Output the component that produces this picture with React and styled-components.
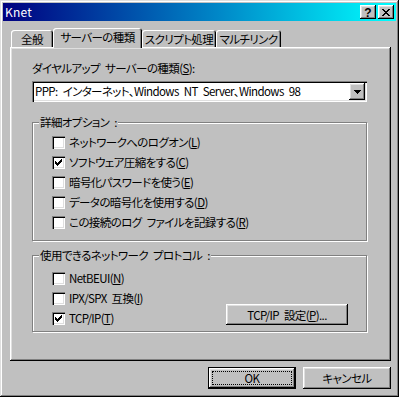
import React from "react";
import styled, { createGlobalStyle } from "styled-components";

const GlobalStyle = createGlobalStyle`
  html, body {
    margin: 0;
    padding: 0;
    background: #c0c0c0;
  }
  body {
    font-family: "Noto Sans CJK JP", "Liberation Sans", sans-serif;
    font-size: 11.5px;
    letter-spacing: -0.6px;
    word-spacing: 3px;
    color: #000;
    font-feature-settings: "palt";
  }
  u {
    text-decoration-thickness: 1px;
    text-underline-offset: 1px;
  }
`;

const raised = `
  box-shadow: inset -1px -1px #000, inset 1px 1px #fff,
    inset -2px -2px #808080, inset 2px 2px #dfdfdf;
`;

const sunken = `
  box-shadow: inset 1px 1px #808080, inset 2px 2px #000,
    inset -1px -1px #fff, inset -2px -2px #dfdfdf;
`;

const Window = styled.div`
  box-sizing: border-box;
  width: 399px;
  height: 397px;
  padding: 3px;
  background: #c0c0c0;
  display: flex;
  flex-direction: column;
  box-shadow: inset -1px -1px #000, inset 1px 1px #dfdfdf,
    inset -2px -2px #808080, inset 2px 2px #fff;
`;

const TitleBar = styled.div`
  height: 18px;
  display: flex;
  align-items: center;
  padding: 0 2px;
  background: linear-gradient(to right, #000080, #0088c8 55%, #00ffff);
`;

const Title = styled.div`
  flex: 1;
  color: #fff;
  font-size: 12px;
  letter-spacing: 0.2px;
  line-height: 18px;
`;

const TitleButtons = styled.div`
  display: flex;
  gap: 2px;
`;

const TitleButton = styled.div`
  box-sizing: border-box;
  width: 16px;
  height: 14px;
  background: #c0c0c0;
  display: flex;
  align-items: center;
  justify-content: center;
  font-family: "Liberation Sans", sans-serif;
  font-weight: bold;
  font-size: 12px;
  letter-spacing: 0;
  line-height: 12px;
  padding-top: 1px;
  ${raised}
`;

const Body = styled.div`
  flex: 1;
  display: flex;
  flex-direction: column;
  padding: 7px 5px 0 7px;
`;

const TabRow = styled.div`
  position: relative;
  z-index: 1;
  display: flex;
  align-items: flex-end;
  height: 20px;
  margin: 0 0 -1px 1px;
`;

const Tab = styled.div`
  box-sizing: border-box;
  width: ${(p) => p.$w}px;
  height: ${(p) => (p.$active ? 20 : 17)}px;
  margin-bottom: ${(p) => (p.$active ? 0 : 1)}px;
  padding-top: 2px;
  text-align: center;
  line-height: 14px;
  white-space: nowrap;
  background: #c0c0c0;
  border-radius: 3px 3px 0 0;
  box-shadow: inset 1px 1px #fff, inset -1px 0 #000, inset -2px 0 #808080;
`;

const Panel = styled.div`
  box-sizing: border-box;
  height: 314px;
  padding: 14px 24px 0 22px;
  display: flex;
  flex-direction: column;
  ${raised}
`;

const FieldLabel = styled.div`
  line-height: 14px;
  white-space: nowrap;
`;

const Combo = styled.div`
  box-sizing: border-box;
  height: 21px;
  margin-top: 6px;
  padding: 2px;
  display: flex;
  align-items: center;
  background: #fff;
  ${sunken}
`;

const ComboText = styled.div`
  flex: 1;
  padding-left: 1px;
  line-height: 17px;
  white-space: nowrap;
`;

const DropButton = styled.div`
  box-sizing: border-box;
  width: 16px;
  height: 17px;
  background: #c0c0c0;
  display: flex;
  align-items: center;
  justify-content: center;
  ${raised}
`;

const GroupBox = styled.div`
  margin-top: ${(p) => p.$top}px;
  padding-bottom: ${(p) => p.$bottom}px;
  border: 1px solid #808080;
  box-shadow: inset 1px 1px #fff, 1px 1px #fff;
  display: flex;
  flex-direction: column;
`;

const GroupLabel = styled.div`
  align-self: flex-start;
  margin: -8px 0 0 6px;
  padding: 0 1px;
  line-height: 14px;
  background: #c0c0c0;
  white-space: nowrap;
`;

const GroupInner = styled.div`
  display: flex;
  align-items: flex-end;
  padding: ${(p) => p.$top}px 18px 0 19px;
`;

const RowList = styled.div`
  display: flex;
  flex-direction: column;
  gap: 7px;
`;

const Row = styled.label`
  display: flex;
  align-items: center;
  gap: 4px;
  height: 13px;
  line-height: 13px;
  white-space: nowrap;
`;

const Box = styled.span`
  box-sizing: border-box;
  width: 13px;
  height: 13px;
  flex: none;
  background: #fff;
  display: flex;
  align-items: center;
  justify-content: center;
  ${sunken}
`;

const Button = styled.div`
  box-sizing: border-box;
  width: ${(p) => p.$w}px;
  height: ${(p) => p.$h}px;
  margin-left: ${(p) => (p.$push ? "auto" : "0")};
  display: flex;
  align-items: center;
  justify-content: center;
  background: #c0c0c0;
  line-height: 14px;
  white-space: nowrap;
  ${(p) =>
    p.$default
      ? `box-shadow: inset 0 0 0 1px #000, inset -2px -2px #000, inset 2px 2px #fff,
         inset -3px -3px #808080, inset 3px 3px #dfdfdf;`
      : raised}
`;

const Focus = styled.div`
  box-sizing: border-box;
  width: calc(100% - 8px);
  height: calc(100% - 8px);
  border: 1px dotted #000;
  display: flex;
  align-items: center;
  justify-content: center;
`;

const ButtonRow = styled.div`
  display: flex;
  justify-content: flex-end;
  gap: 7px;
  margin-top: 6px;
`;

const Check = () => (
  <svg width="7" height="7" viewBox="0 0 7 7" shapeRendering="crispEdges">
    <path
      d="M6 0h1v1h-1zM5 1h2v1h-2zM0 2h1v1h-1zM4 2h3v1h-3zM0 3h2v1h-2zM3 3h3v1h-3zM0 4h5v1h-5zM1 5h3v1h-3zM2 6h1v1h-1z"
      fill="#000"
    />
  </svg>
);

const DownArrow = () => (
  <svg width="7" height="4" viewBox="0 0 7 4" shapeRendering="crispEdges">
    <path d="M0 0h7v1h-7zM1 1h5v1h-5zM2 2h3v1h-3zM3 3h1v1h-1z" fill="#000" />
  </svg>
);

const CloseGlyph = () => (
  <svg width="8" height="7" viewBox="0 0 8 7" shapeRendering="crispEdges">
    <path
      d="M0 0h2v1h-2zM6 0h2v1h-2zM1 1h2v1h-2zM5 1h2v1h-2zM2 2h4v1h-4zM3 3h2v1h-2zM2 4h4v1h-4zM1 5h2v1h-2zM5 5h2v1h-2zM0 6h2v1h-2zM6 6h2v1h-2z"
      fill="#000"
    />
  </svg>
);

const Option = ({ checked, children }) => (
  <Row>
    <Box>{checked && <Check />}</Box>
    <span>{children}</span>
  </Row>
);

const options = [
  { text: "ネットワークへのログオン", key: "L" },
  { text: "ソフトウェア圧縮をする", key: "C", checked: true },
  { text: "暗号化パスワードを使う", key: "E" },
  { text: "データの暗号化を使用する", key: "D" },
  { text: "この接続のログ ファイルを記録する", key: "R" },
];

const protocols = [
  { text: "NetBEUI", key: "N" },
  { text: "IPX/SPX 互換", key: "I" },
  { text: "TCP/IP", key: "T", checked: true },
];

export default function App() {
  return (
    <>
      <GlobalStyle />
      <Window>
        <TitleBar>
          <Title>Knet</Title>
          <TitleButtons>
            <TitleButton>?</TitleButton>
            <TitleButton>
              <CloseGlyph />
            </TitleButton>
          </TitleButtons>
        </TitleBar>
        <Body>
          <TabRow>
            <Tab $w={42}>全般</Tab>
            <Tab $w={89} $active>
              サーバーの種類
            </Tab>
            <Tab $w={74}>スクリプト処理</Tab>
            <Tab $w={65}>マルチリンク</Tab>
          </TabRow>
          <Panel>
            <FieldLabel>
              ダイヤルアップ サーバーの種類(<u>S</u>):
            </FieldLabel>
            <Combo>
              <ComboText>PPP: インターネット、Windows NT Server、Windows 98</ComboText>
              <DropButton>
                <DownArrow />
              </DropButton>
            </Combo>
            <GroupBox $top={20} $bottom={11}>
              <GroupLabel>詳細オプション :</GroupLabel>
              <GroupInner $top={7}>
                <RowList>
                  {options.map((o) => (
                    <Option key={o.key} checked={o.checked}>
                      {o.text}(<u>{o.key}</u>)
                    </Option>
                  ))}
                </RowList>
              </GroupInner>
            </GroupBox>
            <GroupBox $top={14} $bottom={6}>
              <GroupLabel>使用できるネットワーク プロトコル :</GroupLabel>
              <GroupInner $top={10}>
                <RowList>
                  {protocols.map((o) => (
                    <Option key={o.key} checked={o.checked}>
                      {o.text}(<u>{o.key}</u>)
                    </Option>
                  ))}
                </RowList>
                <Button $w={122} $h={21} $push>
                  TCP/IP 設定(<u>P</u>)...
                </Button>
              </GroupInner>
            </GroupBox>
          </Panel>
          <ButtonRow>
            <Button $w={88} $h={22} $default>
              <Focus>OK</Focus>
            </Button>
            <Button $w={88} $h={22}>
              キャンセル
            </Button>
          </ButtonRow>
        </Body>
      </Window>
    </>
  );
}
